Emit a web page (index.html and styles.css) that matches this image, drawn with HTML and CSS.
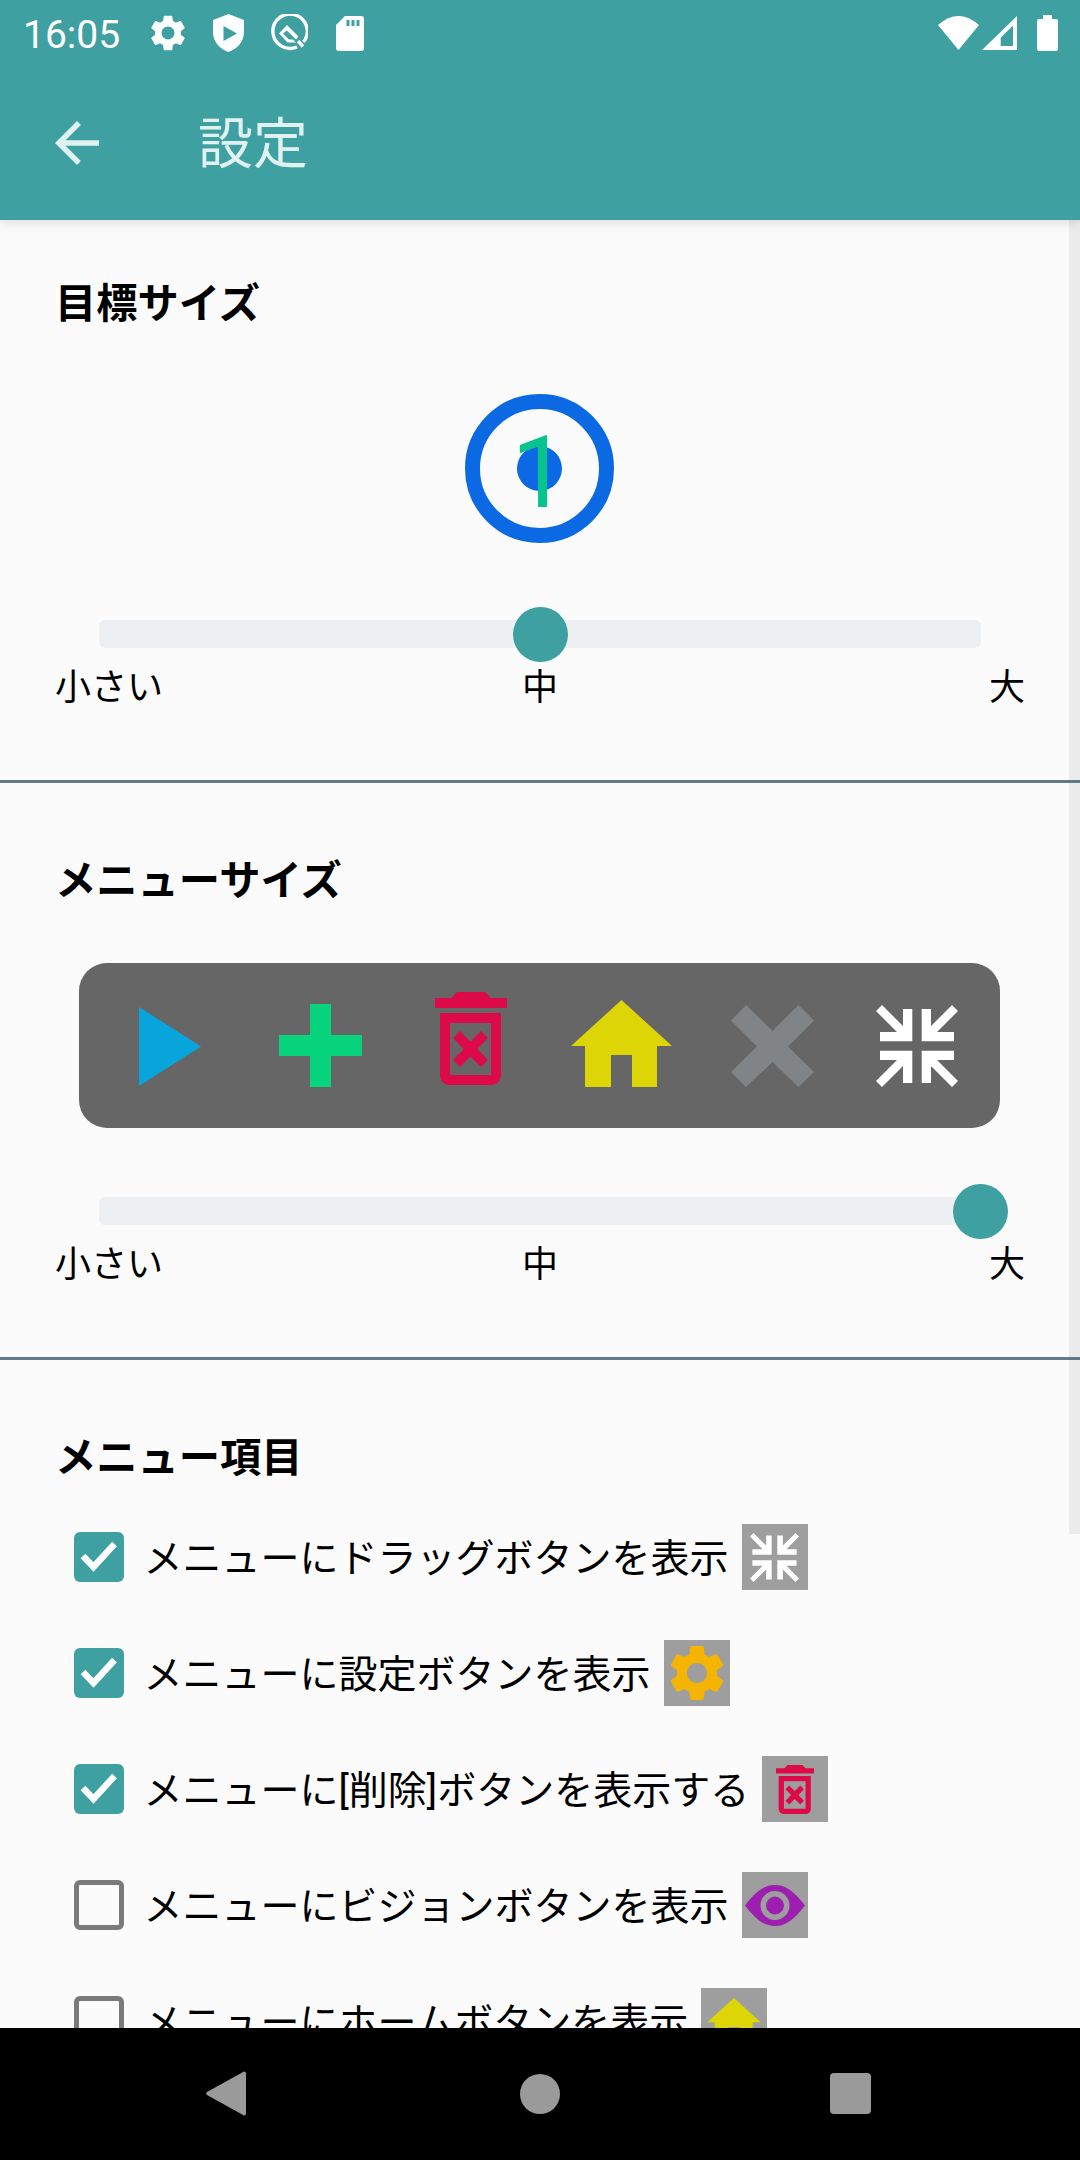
FILE: index.html
```html
<!DOCTYPE html>
<html lang="ja">
<head>
    <meta charset="UTF-8">
    <title>設定</title>
    <link rel="stylesheet" href="styles.css">
</head>
<body>
    <svg class="sprite">
        <symbol id="i-gear" viewBox="2.5 2 19 20">
            <path d="M19.14 12.94c.04-.3.06-.61.06-.94 0-.32-.02-.64-.07-.94l2.03-1.58c.18-.14.23-.41.12-.61l-1.92-3.32c-.12-.22-.37-.29-.59-.22l-2.39.96c-.5-.38-1.03-.7-1.62-.94l-.36-2.54c-.04-.24-.24-.41-.48-.41h-3.84c-.24 0-.43.17-.47.41l-.36 2.54c-.59.24-1.13.57-1.62.94l-2.39-.96c-.22-.08-.47 0-.59.22L2.74 8.87c-.12.21-.08.47.12.61l2.03 1.58c-.05.3-.09.63-.09.94s.02.64.07.94l-2.03 1.58c-.18.14-.23.41-.12.61l1.92 3.32c.12.22.37.29.59.22l2.39-.96c.5.38 1.03.7 1.62.94l.36 2.54c.05.24.24.41.48.41h3.84c.24 0 .44-.17.47-.41l.36-2.54c.59-.24 1.13-.56 1.62-.94l2.39.96c.22.08.47 0 .59-.22l1.92-3.32c.12-.22.07-.47-.12-.61l-2.01-1.58zM12 15.6c-1.98 0-3.6-1.62-3.6-3.6s1.62-3.6 3.6-3.6 3.6 1.62 3.6 3.6-1.62 3.6-3.6 3.6z"/>
        </symbol>
        <symbol id="i-play" viewBox="0 0 62 79">
            <polygon points="0,0 62,39.5 0,79"/>
        </symbol>
        <symbol id="i-plus" viewBox="0 0 83 83">
            <polygon points="31,0 52,0 52,31 83,31 83,52 52,52 52,83 31,83 31,52 0,52 0,31 31,31"/>
        </symbol>
        <symbol id="i-trash" viewBox="0 0 72 93">
            <path fill-rule="evenodd" d="M0 6H16L22 0H50L56 6H72V16H0ZM5 21H66V84a9 9 0 0 1-9 9H14a9 9 0 0 1-9-9ZM15 31V83H56V31Z"/>
            <polygon points="25,39 35.5,49.5 46,39 53,46 42.5,57 53,68 46,75 35.5,64.5 25,75 18,68 28.5,57 18,46"/>
        </symbol>
        <symbol id="i-home" viewBox="0 0 101 87">
            <polygon points="50.5,0 101,46 86,46 86,87 61,87 61,55 40,55 40,87 14,87 14,46 0,46"/>
        </symbol>
        <symbol id="i-cross" viewBox="0 0 83 82">
            <polygon points="15,0 41.5,26 67.5,0 83,15.5 57,41.5 83,67 67.5,82 41.5,57 15,82 0,67 26,41.5 0,15.5"/>
        </symbol>
        <symbol id="i-compress" viewBox="0 0 82 82">
            <polygon id="i-arrow" points="36.3,4 36.3,36.3 4,36.3 4,27 21,27 0,6 6,0 27,21 27,4"/>
            <use href="#i-arrow" transform="matrix(-1 0 0 1 82 0)"/>
            <use href="#i-arrow" transform="matrix(1 0 0 -1 0 82)"/>
            <use href="#i-arrow" transform="matrix(-1 0 0 -1 82 82)"/>
        </symbol>
        <symbol id="i-eye" viewBox="0 0 60 41">
            <path fill-rule="evenodd" d="M0 20.5C12 5 20 0 30 0S48 5 60 20.5C48 36 40 41 30 41S12 36 0 20.5ZM30 6a14.5 14.5 0 1 0 0 29a14.5 14.5 0 1 0 0-29ZM30 11.5a9 9 0 1 1 0 18a9 9 0 1 1 0-18Z"/>
        </symbol>
        <symbol id="i-check" viewBox="0 0 50 50">
            <polyline points="9,24 19.5,35 40.5,12" fill="none" stroke="#fff" stroke-width="6.5"/>
        </symbol>
    </svg>

    <div class="appbar">
        <div class="status-bar">
            <span class="time">16:05</span>
            <svg class="st-gear"><use href="#i-gear"/></svg>
            <svg class="st-shield" viewBox="0 0 31 38">
                <path fill-rule="evenodd" d="M15.5 0L31 6V18C31 28 24 35 15.5 38C7 35 0 28 0 18V6ZM10.5 12V27L24 19.5Z"/>
            </svg>
            <svg class="st-q" viewBox="0 0 38 38">
                <path class="q-ring" d="M27 33A17.200 17.200 0 1 1 33.500 28"/>
                <path class="q-ring" d="M28 27L33 32.500"/>
                <path d="M17 11L28.500 22.500L26 25.500L16.800 16.500L13 19.500L19 25.500H23L26 28.500H17.500L9 19.500Z"/>
            </svg>
            <svg class="st-sd" viewBox="0 0 28 35">
                <path fill-rule="evenodd" d="M9 0H25a3 3 0 0 1 3 3V32a3 3 0 0 1-3 3H3a3 3 0 0 1-3-3V9ZM10.500 4V10H13.500V4ZM15.500 4V10H18.500V4ZM20.500 4V10H23.500V4Z"/>
            </svg>
            <div class="status-right">
                <svg class="st-wifi" viewBox="0 0 41 34"><path d="M0 9Q20.500-9 41 9L20.500 34Z"/></svg>
                <svg class="st-signal" viewBox="0 0 35 34">
                    <path fill-rule="evenodd" d="M35 0V34H0ZM18.700 30H31V9.500L18.700 21.700Z"/>
                </svg>
                <svg class="st-battery" viewBox="0 0 21 36">
                    <path d="M6 0H15V4H19a2 2 0 0 1 2 2V34a2 2 0 0 1-2 2H2a2 2 0 0 1-2-2V6a2 2 0 0 1 2-2H6Z"/>
                </svg>
            </div>
        </div>
        <div class="toolbar">
            <svg class="back" viewBox="4 4 16 16">
                <path d="M20 11H7.830l5.590-5.590L12 4l-8 8 8 8 1.410-1.410L7.830 13H20v-2z"/>
            </svg>
            <h1>設定</h1>
        </div>
    </div>

    <div class="content">
        <div class="scrollbar"></div>

        <section class="section section-first">
            <h2>目標サイズ</h2>
            <div class="preview">
                <div class="target">
                    <div class="target-dot"></div>
                    <span class="target-num">1</span>
                </div>
            </div>
            <div class="slider">
                <div class="track"></div>
                <div class="thumb" style="left: 50%"></div>
            </div>
            <div class="slider-labels"><span>小さい</span><span>中</span><span>大</span></div>
        </section>

        <section class="section">
            <h2>メニューサイズ</h2>
            <div class="preview">
                <div class="menu-bar">
                    <svg class="m-play"><use href="#i-play"/></svg>
                    <svg class="m-plus"><use href="#i-plus"/></svg>
                    <svg class="m-trash"><use href="#i-trash"/></svg>
                    <svg class="m-home"><use href="#i-home"/></svg>
                    <svg class="m-cross"><use href="#i-cross"/></svg>
                    <svg class="m-compress"><use href="#i-compress"/></svg>
                </div>
            </div>
            <div class="slider">
                <div class="track"></div>
                <div class="thumb" style="left: 99.9%"></div>
            </div>
            <div class="slider-labels"><span>小さい</span><span>中</span><span>大</span></div>
        </section>

        <section class="section section-last">
            <h2>メニュー項目</h2>
            <div class="items">
                <div class="item">
                    <span class="checkbox checked"><svg><use href="#i-check"/></svg></span>
                    <span class="item-text">メニューにドラッグボタンを表示</span>
                    <span class="item-icon"><svg class="s-compress"><use href="#i-compress"/></svg></span>
                </div>
                <div class="item">
                    <span class="checkbox checked"><svg><use href="#i-check"/></svg></span>
                    <span class="item-text">メニューに設定ボタンを表示</span>
                    <span class="item-icon"><svg class="s-gear"><use href="#i-gear"/></svg></span>
                </div>
                <div class="item">
                    <span class="checkbox checked"><svg><use href="#i-check"/></svg></span>
                    <span class="item-text">メニューに[削除]ボタンを表示する</span>
                    <span class="item-icon"><svg class="s-trash"><use href="#i-trash"/></svg></span>
                </div>
                <div class="item">
                    <span class="checkbox"></span>
                    <span class="item-text">メニューにビジョンボタンを表示</span>
                    <span class="item-icon"><svg class="s-eye"><use href="#i-eye"/></svg></span>
                </div>
                <div class="item">
                    <span class="checkbox"></span>
                    <span class="item-text">メニューにホームボタンを表示</span>
                    <span class="item-icon"><svg class="s-home"><use href="#i-home"/></svg></span>
                </div>
            </div>
        </section>
    </div>

    <div class="nav-bar">
        <svg class="nav-back" viewBox="0 0 40 45">
            <path d="M38 0.500a2 2 0 0 1 2 2V42.500a2 2 0 0 1-2 2L1 24a2 2 0 0 1 0-3Z"/>
        </svg>
        <div class="nav-home"></div>
        <div class="nav-recent"></div>
    </div>
</body>
</html>
```

FILE: styles.css
```css
* {
    margin: 0;
    padding: 0;
    box-sizing: border-box;
}

body {
    width: 1080px;
    height: 2160px;
    display: flex;
    flex-direction: column;
    overflow: hidden;
    background: #fbfbfb;
    color: #000;
    font-family: Roboto, "Noto Sans CJK JP", sans-serif;
}

svg {
    display: block;
}

.sprite {
    display: none;
}

/* top bars */
.appbar {
    position: relative;
    z-index: 2;
    background: #3fa0a1;
    box-shadow: 0 3px 11px rgba(0, 0, 0, 0.12);
    flex-shrink: 0;
}

.status-bar {
    height: 66px;
    display: flex;
    align-items: center;
    gap: 27px;
    padding: 0 22px 0 23px;
    fill: #fff;
}

.time {
    width: 96px;
    margin-right: 5px;
    padding-top: 3px;
    font-size: 39px;
    color: #fff;
}

.st-gear { width: 34px; height: 36px; }
.st-shield { width: 31px; height: 38px; margin-left: 1px; }
.st-q { width: 38px; height: 38px; margin-left: -1px; }
.st-sd { width: 28px; height: 35px; margin-left: 1px; }

.q-ring {
    fill: none;
    stroke: #fff;
    stroke-width: 3.4;
}

.status-right {
    margin-left: auto;
    display: flex;
    align-items: center;
    gap: 3px;
}

.st-wifi { width: 41px; height: 34px; }
.st-signal { width: 35px; height: 34px; }
.st-battery { width: 21px; height: 36px; margin-left: 17px; }

.toolbar {
    height: 154px;
    display: flex;
    align-items: center;
    padding-left: 55px;
    color: #e0f1f1;
    fill: #e0f1f1;
}

.back {
    width: 44px;
    height: 44px;
}

.toolbar h1 {
    margin-left: 99px;
    padding-top: 2px;
    font-size: 55px;
    font-weight: 400;
    line-height: 64px;
}

/* settings list */
.content {
    flex: 1;
    position: relative;
    overflow: hidden;
}

.scrollbar {
    position: absolute;
    top: 0;
    right: 0;
    width: 11px;
    height: 1314px;
    background: #ebebeb;
}

.section {
    position: relative;
    padding: 68px 56px 68px;
    border-bottom: 3px solid #5f7a88;
}

.section-first {
    padding-top: 54px;
}

.section-last {
    border-bottom: 0;
}

.section h2 {
    margin-left: -1px;
    padding-top: 4px;
    font-size: 41.25px;
    font-weight: 700;
    line-height: 53px;
}

.preview {
    height: 165px;
    margin-top: 55px;
    padding-right: 1px;
    display: flex;
    align-items: center;
    justify-content: center;
}

.target {
    width: 149px;
    height: 149px;
    display: grid;
    place-items: center;
    border: 15px solid #0b69e4;
    border-radius: 50%;
}

.target-dot, .target-num {
    grid-area: 1 / 1;
}

.target-dot {
    width: 45px;
    height: 45px;
    border-radius: 50%;
    background: #0b69e4;
}

.target-num {
    margin-top: 8px;
    font-size: 100px;
    line-height: 1;
    color: #07c48f;
}

.slider {
    position: relative;
    height: 55px;
    margin: 56px 43px 0;
}

.track {
    width: 100%;
    height: 28px;
    margin-top: 13px;
    float: left;
    border-radius: 6px;
    background: #ecf0f3;
}

.thumb {
    position: absolute;
    top: 0;
    width: 55px;
    height: 55px;
    margin-left: -27px;
    border-radius: 50%;
    background: #3fa0a1;
}

.slider-labels {
    display: grid;
    grid-template-columns: 1fr auto 1fr;
    margin: 0 -1px;
    padding-top: 3px;
    font-size: 36px;
    line-height: 47px;
}

.slider-labels span:last-child {
    text-align: right;
}

/* menu preview */
.menu-bar {
    width: 921px;
    height: 165px;
    display: grid;
    grid-template-columns: 150px 150px 151px 151px 151px 138px;
    align-items: center;
    justify-items: center;
    padding-left: 16px;
    border-radius: 28px;
    background: #666;
}

.m-play { width: 62px; height: 79px; fill: #08a5dc; margin-top: 2px; }
.m-plus { width: 83px; height: 83px; fill: #08d47e; }
.m-trash { width: 72px; height: 93px; fill: #dd0a4a; margin-bottom: 14px; }
.m-home { width: 101px; height: 87px; fill: #ddd506; margin-bottom: 4px; }
.m-cross { width: 83px; height: 82px; fill: #808487; }
.m-compress { width: 82px; height: 82px; fill: #fff; }

/* checkbox rows */
.items {
    margin-top: 39px;
    margin-left: 18px;
    display: flex;
    flex-direction: column;
    gap: 50px;
}

.item {
    height: 66px;
    display: flex;
    align-items: center;
}

.checkbox {
    width: 50px;
    height: 50px;
    flex-shrink: 0;
    border: 5px solid #7a7a7a;
    border-radius: 6px;
}

.checkbox.checked {
    border: 0;
    background: #3fa0a1;
}

.checkbox svg {
    width: 50px;
    height: 50px;
}

.item-text {
    margin-left: 19.5px;
    padding-top: 3px;
    font-size: 39px;
    line-height: 56px;
    white-space: nowrap;
}

.item-icon {
    width: 66px;
    height: 66px;
    flex-shrink: 0;
    margin-left: 13px;
    display: flex;
    align-items: center;
    justify-content: center;
    background: #9e9e9e;
}

.s-compress { width: 49px; height: 49px; fill: #fff; }
.s-gear { width: 54px; height: 56px; fill: #f5b400; }
.s-trash { width: 38px; height: 49px; fill: #dd0a4a; }
.s-eye { width: 60px; height: 41px; fill: #9c1fb0; }
.s-home { width: 54px; height: 46px; fill: #ddd506; }

/* android nav bar */
.nav-bar {
    position: relative;
    z-index: 2;
    height: 132px;
    flex-shrink: 0;
    display: flex;
    align-items: center;
    padding-left: 206px;
    background: #000;
}

.nav-back {
    width: 40px;
    height: 45px;
    fill: #9a9a9a;
    margin-top: -1px;
}

.nav-home {
    width: 40px;
    height: 40px;
    margin-left: 274px;
    border-radius: 50%;
    background: #9a9a9a;
    margin-top: -1px;
}

.nav-recent {
    width: 41px;
    height: 41px;
    margin-left: 270px;
    border-radius: 4px;
    background: #9a9a9a;
    margin-top: -1px;
}
```
